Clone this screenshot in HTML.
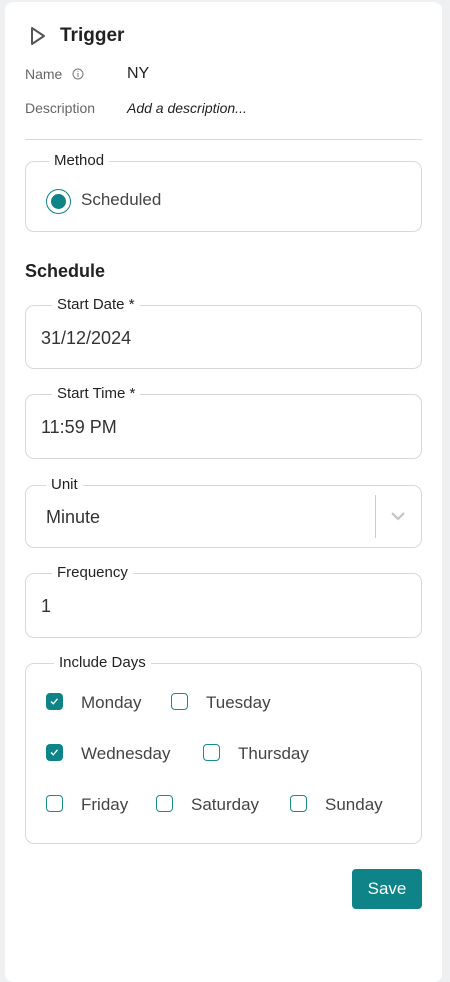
<!DOCTYPE html>
<html><head><style>
*{box-sizing:border-box;margin:0;padding:0}
body{width:450px;height:971px;background:#eef0f2;font-family:"Liberation Sans",sans-serif;position:relative;overflow:hidden}
.card{position:absolute;left:5px;top:2px;width:437px;height:980px;background:#fff;border-radius:8px}
.a{position:absolute;white-space:nowrap}
.box{position:absolute;left:25px;width:397px;border:1px solid #d6d9dc;border-radius:9px}
.lg{position:absolute;background:#fff;padding:0 5px;font-size:15px;color:#222;line-height:16px}
.val{position:absolute;left:15px;font-size:18px;color:#333}
.cb{position:absolute;width:17px;height:17px;border:1.5px solid #1a8a8f;border-radius:4px}
.cb.on{background:#0e8388;border-color:#0e8388}
.dl{position:absolute;font-size:17px;color:#444}
</style></head><body>
<div class="card"></div>
<svg class="a" style="left:29px;top:26px" width="18" height="20" viewBox="0 0 18 20"><path d="M3 2 L15 10 L3 18 Z" fill="none" stroke="#555" stroke-width="2" stroke-linejoin="round"/></svg>
<div class="a" style="left:60px;top:25px;font-size:19px;font-weight:bold;color:#222">Trigger</div>
<div class="a" style="left:25px;top:66px;font-size:14px;color:#666">Name</div>
<svg class="a" style="left:72px;top:68px" width="12" height="12"><circle cx="6" cy="6" r="5" fill="none" stroke="#777"/><path d="M6 5v4M6 3v.8" stroke="#777"/></svg>
<div class="a" style="left:127px;top:65px;font-size:16px;color:#222">NY</div>
<div class="a" style="left:25px;top:100px;font-size:14px;color:#666">Description</div>
<div class="a" style="left:127px;top:100px;font-size:14px;font-style:italic;color:#222">Add a description...</div>
<div class="a" style="left:25px;top:139px;width:397px;height:1px;background:#d6d9dc"></div>

<div class="box" style="top:161px;height:71px"><div class="lg" style="left:23px;top:-9px">Method</div>
<div class="a" style="left:20px;top:27px;width:25px;height:25px;border:1.5px solid #0e8388;border-radius:50%"><div style="position:absolute;left:3.5px;top:3.5px;width:15px;height:15px;border-radius:50%;background:#0e8388"></div></div>
<div class="a" style="left:55px;top:28px;font-size:17px;color:#444">Scheduled</div></div>

<div class="a" style="left:25px;top:261px;font-size:18px;font-weight:bold;color:#222">Schedule</div>

<div class="box" style="top:305px;height:64px"><div class="lg" style="left:26px;top:-9px">Start Date *</div><div class="val" style="top:22px">31/12/2024</div></div>
<div class="box" style="top:394px;height:65px"><div class="lg" style="left:26px;top:-9px">Start Time *</div><div class="val" style="top:22px">11:59 PM</div></div>
<div class="box" style="top:485px;height:63px"><div class="lg" style="left:20px;top:-9px">Unit</div><div class="val" style="left:20px;top:21px">Minute</div>
<div class="a" style="left:349px;top:9px;width:1px;height:43px;background:#ccc"></div>
<svg class="a" style="left:364px;top:25px" width="16" height="10"><path d="M2 2 L8 8 L14 2" fill="none" stroke="#c4c4c4" stroke-width="2.2"/></svg></div>
<div class="box" style="top:573px;height:65px"><div class="lg" style="left:26px;top:-9px">Frequency</div><div class="val" style="top:22px">1</div></div>

<div class="box" style="top:663px;height:181px"><div class="lg" style="left:28px;top:-9px">Include Days</div></div>
<div class="cb on" style="left:46px;top:693px"><svg width="14" height="14" style="position:absolute;left:0;top:0"><path d="M4 7.5 L6.3 9.8 L10.5 4.8" fill="none" stroke="#fff" stroke-width="1.3"/></svg></div>
<div class="dl" style="left:81px;top:693px">Monday</div>
<div class="cb" style="left:171px;top:693px"></div><div class="dl" style="left:206px;top:693px">Tuesday</div>
<div class="cb on" style="left:46px;top:744px"><svg width="14" height="14" style="position:absolute;left:0;top:0"><path d="M4 7.5 L6.3 9.8 L10.5 4.8" fill="none" stroke="#fff" stroke-width="1.3"/></svg></div>
<div class="dl" style="left:81px;top:744px">Wednesday</div>
<div class="cb" style="left:203px;top:744px"></div><div class="dl" style="left:238px;top:744px">Thursday</div>
<div class="cb" style="left:46px;top:795px"></div><div class="dl" style="left:81px;top:795px">Friday</div>
<div class="cb" style="left:156px;top:795px"></div><div class="dl" style="left:191px;top:795px">Saturday</div>
<div class="cb" style="left:290px;top:795px"></div><div class="dl" style="left:325px;top:795px">Sunday</div>

<div class="a" style="left:352px;top:869px;width:70px;height:40px;background:#0e8388;border-radius:4px;color:#fff;font-size:17px;text-align:center;line-height:40px">Save</div>
</body></html>
